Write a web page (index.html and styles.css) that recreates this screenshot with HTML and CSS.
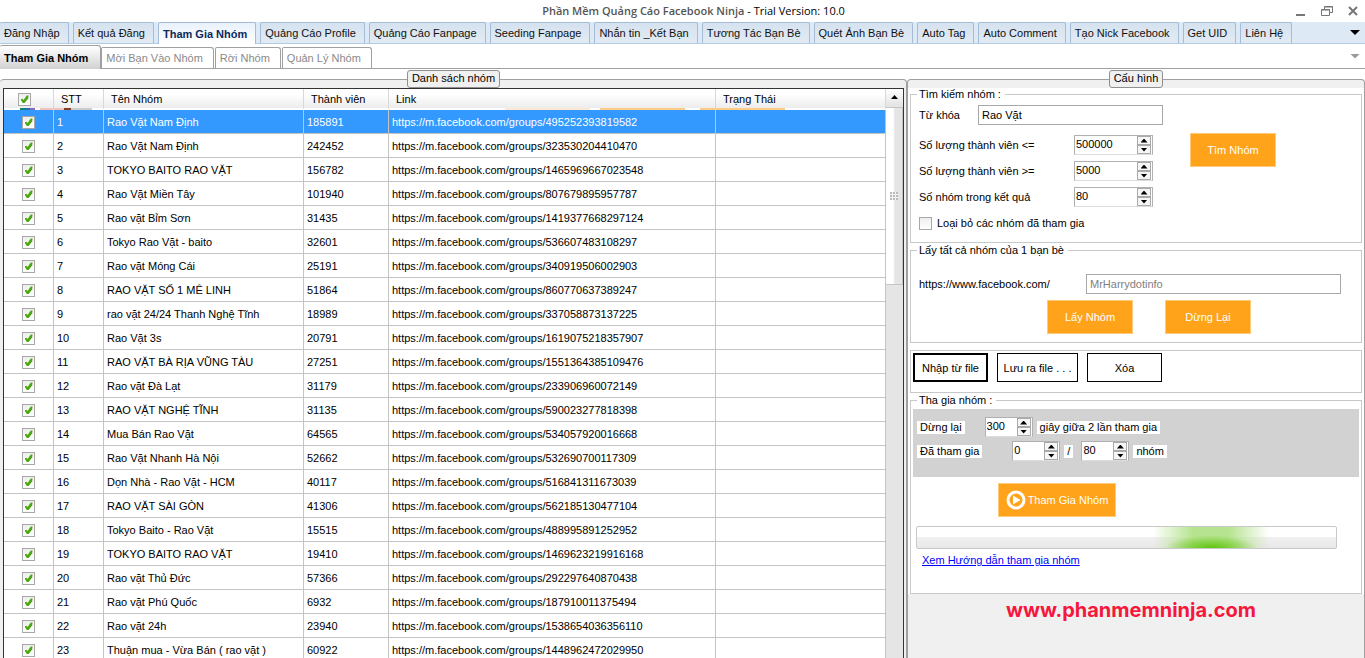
FILE: index.html
```html
<!DOCTYPE html>
<html lang="vi">
<head>
<meta charset="utf-8">
<title>Phần Mềm Quảng Cáo Facebook Ninja</title>
<link rel="stylesheet" href="styles.css">
</head>
<body>
<div class="app">
  <header class="titlebar">
    <h1 class="title">Phần Mềm Quảng Cáo Facebook Ninja <span class="version">- Trial Version: 10.0</span></h1>
    <div class="window-controls">
      <button class="window-button" type="button" aria-label="Minimize"><svg width="12" height="12" viewBox="0 0 12 12"><path d="M1 9h9v2H1z" fill="#777"/></svg></button>
      <button class="window-button" type="button" aria-label="Restore"><svg width="12" height="12" viewBox="0 0 12 12" fill="none" stroke="#777"><path d="M3.500 4V1.500H11.500V7.500H9M3 2h9M.5 4.500h8v6H.5zM0 5h9"/></svg></button>
      <button class="window-button" type="button" aria-label="Close"><svg width="12" height="12" viewBox="0 0 12 12" stroke="#777" stroke-width="2"><path d="M2 2l8 8M10 2l-8 8"/></svg></button>
    </div>
  </header>

  <nav class="tabs">
    <button class="tab" type="button">Đăng Nhập</button>
    <button class="tab" type="button">Kết quả Đăng</button>
    <button class="tab tab-active" type="button">Tham Gia Nhóm</button>
    <button class="tab" type="button">Quảng Cáo Profile</button>
    <button class="tab" type="button">Quảng Cáo Fanpage</button>
    <button class="tab" type="button">Seeding Fanpage</button>
    <button class="tab" type="button">Nhắn tin _Kết Bạn</button>
    <button class="tab" type="button">Tương Tác Bạn Bè</button>
    <button class="tab" type="button">Quét Ảnh Bạn Bè</button>
    <button class="tab" type="button">Auto Tag</button>
    <button class="tab" type="button">Auto Comment</button>
    <button class="tab" type="button">Tạo Nick Facebook</button>
    <button class="tab" type="button">Get UID</button>
    <button class="tab" type="button">Liên Hệ</button>
    <button class="more" type="button" aria-label="More tabs"></button>
  </nav>

  <nav class="subtabs">
    <button class="subtab subtab-active" type="button">Tham Gia Nhóm</button>
    <button class="subtab" type="button">Mời Bạn Vào Nhóm</button>
    <button class="subtab" type="button">Rời Nhóm</button>
    <button class="subtab" type="button">Quản Lý Nhóm</button>
    <button class="more more-muted" type="button" aria-label="More pages"></button>
  </nav>

  <main class="workspace">
    <fieldset class="panel panel-list">
      <legend class="panel-title">Danh sách nhóm</legend>
      <div class="grid-frame">
        <table class="groups">
          <colgroup><col class="col-check"><col class="col-index"><col class="col-name"><col class="col-members"><col class="col-link"><col class="col-status"></colgroup>
          <thead>
            <tr><th><input class="check" type="checkbox" checked aria-label="Chọn tất cả"></th><th>STT</th><th>Tên Nhóm</th><th>Thành viên</th><th>Link</th><th>Trạng Thái</th></tr>
          </thead>
          <tbody>
            <tr class="selected"><td><input class="check" type="checkbox" checked aria-label="1"></td><td>1</td><td>Rao Vặt Nam Định</td><td>185891</td><td>https://m.facebook.com/groups/495252393819582</td><td></td></tr>
            <tr><td><input class="check" type="checkbox" checked aria-label="2"></td><td>2</td><td>Rao Vặt Nam Định</td><td>242452</td><td>https://m.facebook.com/groups/323530204410470</td><td></td></tr>
            <tr><td><input class="check" type="checkbox" checked aria-label="3"></td><td>3</td><td>TOKYO BAITO RAO VẶT</td><td>156782</td><td>https://m.facebook.com/groups/1465969667023548</td><td></td></tr>
            <tr><td><input class="check" type="checkbox" checked aria-label="4"></td><td>4</td><td>Rao Vặt Miền Tây</td><td>101940</td><td>https://m.facebook.com/groups/807679895957787</td><td></td></tr>
            <tr><td><input class="check" type="checkbox" checked aria-label="5"></td><td>5</td><td>Rao vặt Bỉm Sơn</td><td>31435</td><td>https://m.facebook.com/groups/1419377668297124</td><td></td></tr>
            <tr><td><input class="check" type="checkbox" checked aria-label="6"></td><td>6</td><td>Tokyo Rao Vặt - baito</td><td>32601</td><td>https://m.facebook.com/groups/536607483108297</td><td></td></tr>
            <tr><td><input class="check" type="checkbox" checked aria-label="7"></td><td>7</td><td>Rao vặt Móng Cái</td><td>25191</td><td>https://m.facebook.com/groups/340919506002903</td><td></td></tr>
            <tr><td><input class="check" type="checkbox" checked aria-label="8"></td><td>8</td><td>RAO VẶT SỐ 1 MÊ LINH</td><td>51864</td><td>https://m.facebook.com/groups/860770637389247</td><td></td></tr>
            <tr><td><input class="check" type="checkbox" checked aria-label="9"></td><td>9</td><td>rao vặt 24/24 Thanh Nghệ Tĩnh</td><td>18989</td><td>https://m.facebook.com/groups/337058873137225</td><td></td></tr>
            <tr><td><input class="check" type="checkbox" checked aria-label="10"></td><td>10</td><td>Rao Vặt 3s</td><td>20791</td><td>https://m.facebook.com/groups/1619075218357907</td><td></td></tr>
            <tr><td><input class="check" type="checkbox" checked aria-label="11"></td><td>11</td><td>RAO VẶT BÀ RỊA VŨNG TÀU</td><td>27251</td><td>https://m.facebook.com/groups/1551364385109476</td><td></td></tr>
            <tr><td><input class="check" type="checkbox" checked aria-label="12"></td><td>12</td><td>Rao vặt Đà Lạt</td><td>31179</td><td>https://m.facebook.com/groups/233906960072149</td><td></td></tr>
            <tr><td><input class="check" type="checkbox" checked aria-label="13"></td><td>13</td><td>RAO VẶT NGHỆ TĨNH</td><td>31135</td><td>https://m.facebook.com/groups/590023277818398</td><td></td></tr>
            <tr><td><input class="check" type="checkbox" checked aria-label="14"></td><td>14</td><td>Mua Bán Rao Vặt</td><td>64565</td><td>https://m.facebook.com/groups/534057920016668</td><td></td></tr>
            <tr><td><input class="check" type="checkbox" checked aria-label="15"></td><td>15</td><td>Rao Vặt Nhanh Hà Nội</td><td>52662</td><td>https://m.facebook.com/groups/532690700117309</td><td></td></tr>
            <tr><td><input class="check" type="checkbox" checked aria-label="16"></td><td>16</td><td>Dọn Nhà - Rao Vặt - HCM</td><td>40117</td><td>https://m.facebook.com/groups/516841311673039</td><td></td></tr>
            <tr><td><input class="check" type="checkbox" checked aria-label="17"></td><td>17</td><td>RAO VẶT SÀI GÒN</td><td>41306</td><td>https://m.facebook.com/groups/562185130477104</td><td></td></tr>
            <tr><td><input class="check" type="checkbox" checked aria-label="18"></td><td>18</td><td>Tokyo Baito - Rao Vặt</td><td>15515</td><td>https://m.facebook.com/groups/488995891252952</td><td></td></tr>
            <tr><td><input class="check" type="checkbox" checked aria-label="19"></td><td>19</td><td>TOKYO BAITO RAO VẶT</td><td>19410</td><td>https://m.facebook.com/groups/1469623219916168</td><td></td></tr>
            <tr><td><input class="check" type="checkbox" checked aria-label="20"></td><td>20</td><td>Rao vặt Thủ Đức</td><td>57366</td><td>https://m.facebook.com/groups/292297640870438</td><td></td></tr>
            <tr><td><input class="check" type="checkbox" checked aria-label="21"></td><td>21</td><td>Rao vặt Phú Quốc</td><td>6932</td><td>https://m.facebook.com/groups/187910011375494</td><td></td></tr>
            <tr><td><input class="check" type="checkbox" checked aria-label="22"></td><td>22</td><td>Rao vặt 24h</td><td>23940</td><td>https://m.facebook.com/groups/1538654036356110</td><td></td></tr>
            <tr><td><input class="check" type="checkbox" checked aria-label="23"></td><td>23</td><td>Thuận mua - Vừa Bán ( rao vặt )</td><td>60922</td><td>https://m.facebook.com/groups/1448962472029950</td><td></td></tr>
          </tbody>
        </table>
        <div class="scrollbar">
          <button class="scroll-up" type="button" aria-label="Scroll up"></button>
          <div class="scroll-thumb"><span class="scroll-grip"></span></div>
        </div>
      </div>
    </fieldset>

    <fieldset class="panel panel-config">
      <legend class="panel-title">Cấu hình</legend>
      <div class="config">
        <fieldset class="group search">
          <legend class="group-title">Tìm kiếm nhóm :</legend>
          <div class="search-fields">
            <div class="field"><label class="label-short" for="keyword">Từ khóa</label><input class="text text-keyword" id="keyword" type="text" value="Rao Vặt"></div>
            <div class="field field-first"><label class="label-long" for="max">Số lượng thành viên &lt;=</label><span class="spin"><input class="number" id="max" type="number" value="500000"><span class="steps"><button class="step step-up" type="button" aria-label="Tăng"></button><button class="step step-down" type="button" aria-label="Giảm"></button></span></span></div>
            <div class="field"><label class="label-long" for="min">Số lượng thành viên &gt;=</label><span class="spin"><input class="number" id="min" type="number" value="5000"><span class="steps"><button class="step step-up" type="button" aria-label="Tăng"></button><button class="step step-down" type="button" aria-label="Giảm"></button></span></span></div>
            <div class="field"><label class="label-long" for="count">Số nhóm trong kết quả</label><span class="spin"><input class="number" id="count" type="number" value="80"><span class="steps"><button class="step step-up" type="button" aria-label="Tăng"></button><button class="step step-down" type="button" aria-label="Giảm"></button></span></span></div>
            <div class="field"><label class="check-label"><input class="check" type="checkbox">Loại bỏ các nhóm đã tham gia</label></div>
          </div>
          <button class="action search-button" type="button">Tìm Nhóm</button>
        </fieldset>

        <fieldset class="group friend">
          <legend class="group-title">Lấy tất cả nhóm của 1 bạn bè</legend>
          <div class="friend-row"><label class="label-url" for="friend">https://www.facebook.com/</label><input class="text text-friend" id="friend" type="text" value="MrHarrydotinfo"></div>
          <div class="friend-actions"><button class="action" type="button">Lấy Nhóm</button><button class="action" type="button">Dừng Lại</button></div>
        </fieldset>

        <div class="group files">
          <button class="plain plain-focus" type="button">Nhập từ file</button>
          <button class="plain plain-wide" type="button">Lưu ra file . . .</button>
          <button class="plain" type="button">Xóa</button>
        </div>

        <fieldset class="group join">
          <legend class="group-title">Tha gia nhóm :</legend>
          <div class="join-options">
            <div class="join-row">
              <label class="chip chip-delay" for="delay">Dừng lại</label>
              <span class="spin spin-small"><input class="number" id="delay" type="number" value="300"><span class="steps"><button class="step step-up" type="button" aria-label="Tăng"></button><button class="step step-down" type="button" aria-label="Giảm"></button></span></span>
              <span class="chip">giây giữa 2 lần tham gia</span>
            </div>
            <div class="join-row">
              <label class="chip chip-joined" for="joined">Đã tham gia</label>
              <span class="spin spin-small"><input class="number" id="joined" type="number" value="0"><span class="steps"><button class="step step-up" type="button" aria-label="Tăng"></button><button class="step step-down" type="button" aria-label="Giảm"></button></span></span>
              <label class="chip chip-slash" for="total">/</label>
              <span class="spin spin-small"><input class="number" id="total" type="number" value="80"><span class="steps"><button class="step step-up" type="button" aria-label="Tăng"></button><button class="step step-down" type="button" aria-label="Giảm"></button></span></span>
              <span class="chip">nhóm</span>
            </div>
          </div>
          <button class="action join-button" type="button"><svg width="20" height="20" viewBox="0 0 20 20"><circle cx="10" cy="10" r="8" fill="none" stroke="#fff" stroke-width="3"/><path d="M7 5.500l7.500 4.500L7 14.500z" fill="#fff"/></svg>Tham Gia Nhóm</button>
          <div class="progress" role="progressbar" aria-label="Tiến trình"><span class="progress-glow"></span></div>
          <a class="guide" href="#">Xem Hướng dẫn tham gia nhóm</a>
        </fieldset>
      </div>
      <p class="site">www.phanmemninja.com</p>
    </fieldset>
  </main>
</div>
</body>
</html>
```
FILE: styles.css
```css
* { box-sizing: border-box; }
body { margin: 0; background: #fff; color: #000; font: 11px/14px "Liberation Sans", Arial, sans-serif; }
button, input { font: inherit; color: inherit; margin: 0; padding: 0; border: 0; border-radius: 0; background: none; }
fieldset { margin: 0; padding: 0; border: 0; min-width: 0; }
h1, p { margin: 0; }

.app { display: flex; flex-direction: column; height: 100vh; overflow: hidden; }

/* Title bar */
.titlebar { display: flex; align-items: center; flex: none; height: 22px; padding: 0 6px 0 92px; }
.title { flex: 1; text-align: center; font: 600 11px/20px "Open Sans", sans-serif; color: #555; white-space: nowrap; }
.version { font-weight: 500; color: #000; }
.window-controls { display: flex; gap: 14px; }
.window-button { display: flex; width: 12px; height: 12px; }

/* Main tabs */
.tabs { display: flex; flex: none; gap: 4px; height: 22px; background: #dde9f5; border-bottom: 1px solid #b5cbe2; white-space: nowrap; }
.tab { padding: 0 8px 0 4px; border: 1px solid #a4bcd5; border-width: 1px 1px 0; border-radius: 2px 2px 0 0; background: linear-gradient(#d5e2ef, #e2ebf4); color: #111; }
.tab:first-child { border-left: 0; }
.tab-active { margin-bottom: -1px; background: linear-gradient(#e8f1fb, #fff); color: #0b2a5c; font-weight: bold; }
.more { width: 10px; height: 5px; margin: auto 5px auto auto; background: #000; clip-path: polygon(0 0, 100% 0, 50% 100%); }
.more-muted { background: #999; }

/* Sub tabs */
.subtabs { display: flex; flex: none; align-items: flex-end; height: 25px; border-bottom: 1px solid #a0a0a0; white-space: nowrap; }
.subtab { height: 21px; margin-right: 1px; padding: 0 10px 0 4px; border: 1px solid #a0a0a0; border-bottom: 0; border-radius: 2px 3px 0 0; background: #fff; color: #8a8a8a; }
.subtab-active { height: 24px; margin: 0 0 -1px; padding-right: 12px; border-left: 0; background: linear-gradient(#fff, #d2d2d2); color: #000; font-weight: bold; }

/* Panels */
.workspace { display: grid; grid-template-columns: minmax(0, 1fr) 458px; flex: 1; min-height: 0; padding-top: 1px; }
.panel { border: 1px solid #a0a0a0; border-bottom: 0; border-radius: 4px 4px 0 0; background: #f0f0f0; }
.panel-list { border-left: 0; padding-left: 3px; padding-right: 2px; }
.panel-title { height: 18px; margin: 0 auto; padding: 0 4px; border: 1px solid #909090; border-radius: 3px; background: #f0f0f0; line-height: 15px; }

/* Group list */
.grid-frame { display: flex; border: 1px solid #333; }
.groups { flex: 1; min-width: 0; table-layout: fixed; border-collapse: separate; border-spacing: 0; background: #fff; white-space: nowrap; }
.col-check, .col-index { width: 50px; }
.col-name { width: 200px; }
.col-members { width: 85px; }
.col-link { width: 327px; }
.groups thead {
  background:
    linear-gradient(90deg, transparent 16px, #168a5a 16px 20px, #1876a8 20px 26px, #8a6ac0 26px 31px, transparent 31px 36px, #f0c4bc 36px 60px, #8a3a20 60px 67px, #ccc 67px 88px, transparent 88px 501px, #fce9cf 501px 586px, transparent 586px 596px, #fdcb85 596px 681px, transparent 681px 696px, #fdcb85 696px 781px, transparent 781px) #fff;
}
.groups th { height: 21px; padding: 0 7px; border: solid #d8d8d8; border-width: 0 1px 2px 0; border-bottom-color: transparent; background: linear-gradient(#fff 30%, #ececec) padding-box; font-weight: normal; text-align: left; }
.groups th:first-child { padding-left: 14px; }
.groups td { height: 24px; padding: 0 3px; border: 1px solid #c4c4c4; border-width: 0 1px 1px 0; }
.groups td:first-child { text-align: center; }
.groups .selected td { background: #3399ff; color: #fff; }
.check { appearance: none; display: inline-grid; place-items: center; flex: none; width: 13px; height: 13px; border: 1px solid #a8a8a8; background: linear-gradient(#eee, #fff); vertical-align: middle; }
.check:checked::before { content: ""; width: 8px; height: 8px; background: #4ca80f; clip-path: polygon(0 50%, 22% 42%, 38% 60%, 78% 4%, 100% 4%, 96% 40%, 48% 100%, 30% 100%); }

.scrollbar { width: 17px; flex: none; background: #e5e5e5; }
.scroll-up { display: block; width: 100%; height: 16px; background: linear-gradient(#fff, #e5e5e5); }
.scroll-up::before { content: ""; display: block; width: 7px; height: 4px; margin: 0 auto; background: #000; clip-path: polygon(50% 0, 100% 100%, 0 100%); }
.scroll-thumb { display: grid; place-items: center; height: 178px; margin-top: 2px; border: 1px solid #c4c4c4; border-left: 0; background: linear-gradient(90deg, #fff 45%, #e5e5e5 55%); }
.scroll-grip { width: 8px; height: 8px; background: linear-gradient(90deg, transparent 2px, #f4f4f4 2px) 0 0 / 3px 3px, repeating-linear-gradient(#bbb 0 2px, #f4f4f4 2px 3px); }

/* Configuration */
.config { display: grid; gap: 7px; padding: 0 2px; background: #fff; }
.group { border: 1px solid #c8c8c8; }
.group-title { height: 12px; margin: 0 0 0 -2px; padding: 0 4px 0 2px; line-height: 12px; }
.search { display: flex; gap: 27px; padding: 5px 8px 9px; }
.search-fields { display: grid; gap: 6px; }
.field { display: flex; align-items: center; height: 20px; }
.field-first { margin-top: 4px; }
.label-short { width: 59px; }
.label-long { width: 155px; }
.check-label { display: flex; align-items: center; gap: 5px; }
.text { height: 20px; padding: 0 3px; border: 1px solid #a8a8a8; background: #fff; }
.text-keyword { width: 185px; }
.spin { display: flex; width: 79px; height: 20px; border: 1px solid #b0b0b0; border-bottom-color: #ddd; background: #fff; }
.spin-small { width: 48px; }
.number { appearance: textfield; flex: 1; min-width: 0; padding: 0 1px; height: 16px; }
.number::-webkit-inner-spin-button { appearance: none; margin: 0; }
.steps { display: grid; grid-template-rows: 1fr 1fr; width: 14px; height: 18px; margin-right: 1px; }
.step { display: grid; place-items: center; border: 1px solid #aaa; background: #f6f6f6; }
.step::before { content: ""; width: 7px; height: 4px; background: #000; }
.step-up::before { clip-path: polygon(50% 0, 100% 100%, 0 100%); }
.step-down::before { clip-path: polygon(0 0, 100% 0, 50% 100%); }
.action { width: 86px; height: 34px; border: 1px solid #ffcb7a; background: #ffa31a; color: #fff; }
.search-button { margin-top: 28px; }

.friend { margin-top: -6px; padding: 18px 8px 8px; }
.friend-row { display: flex; align-items: center; padding-right: 12px; }
.label-url { width: 167px; }
.text-friend { flex: 1; min-width: 0; color: #808080; }
.friend-actions { display: flex; gap: 32px; margin-top: 6px; padding-left: 128px; }

.files { display: flex; gap: 9px; padding: 2px 2px 10px; }
.plain { width: 75px; height: 29px; border: 1px solid #000; background: #fff; }
.plain-focus { border-width: 2px; }
.plain-wide { width: 81px; }

.join { margin-top: -6px; padding: 3px 2px 26px; }
.join .group-title { margin-left: 4px; }
.join-options { display: grid; gap: 4px; padding: 8px 4px 16px; background: #d2d2d2; }
.join-row { display: flex; align-items: center; gap: 4px; height: 20px; }
.chip { padding: 0 3px; background: #fff; line-height: 13px; }
.chip-delay { margin-right: 16px; }
.chip-joined { margin-right: 26px; }
.chip-slash { margin-right: 4px; }
.join-button { display: flex; align-items: center; justify-content: center; gap: 2px; width: 118px; margin: 6px 0 0 85px; }
.progress { height: 23px; margin: 9px 22px 4px 3px; padding-left: 53%; border: 1px solid #c8c8c8; border-radius: 2px; background: linear-gradient(#fff 50%, #f0f0f0 50%, #e8e8e8); overflow: hidden; }
.progress-glow { display: block; width: 116px; height: 100%; background: radial-gradient(ellipse 40% 60% at 50% 100%, #5dc40b, transparent), linear-gradient(90deg, transparent, #b6e38f 35% 65%, transparent); }
.guide { margin-left: 9px; color: #00f; }
.site { padding-top: 4px; padding-right: 10px; color: #f5173c; font: bold 20px/24px Inter, sans-serif; text-align: center; }
```
